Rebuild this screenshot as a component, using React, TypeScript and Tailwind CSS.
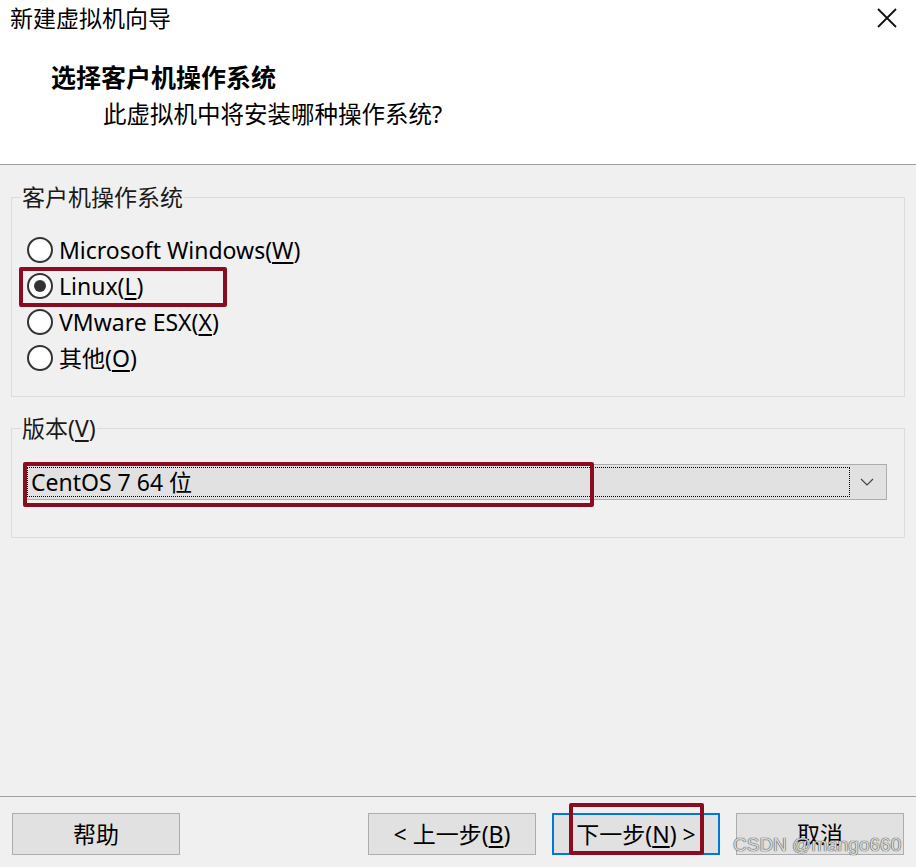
import React from 'react'

const font = '[font-family:"Noto_Sans","Noto_Sans_CJK_SC",sans-serif]'

function Radio({ label, accel, checked }: { label: string; accel: string; checked?: boolean }) {
  return (
    <div className="flex items-center h-[36px] pl-[15px]">
      <span className="w-[26px] h-[26px] rounded-full border-2 border-[#333] bg-white flex items-center justify-center">
        {checked && <span className="w-[12px] h-[12px] rounded-full bg-[#333]" />}
      </span>
      <span className="ml-[6px] text-[23px] leading-none text-black">
        {label}(<span className="underline underline-offset-[3px]">{accel}</span>)
      </span>
    </div>
  )
}

function Button({ children, focused }: { children: React.ReactNode; focused?: boolean }) {
  return (
    <div
      className={
        'w-[168px] h-[42px] flex items-center justify-center bg-[#e1e1e1] text-[23px] text-black ' +
        (focused ? 'border-2 border-[#0078d7]' : 'border border-[#adadad]')
      }
    >
      {children}
    </div>
  )
}

export default function App() {
  return (
    <div className={`relative w-full h-screen bg-[#f0f0f0] flex flex-col text-black ${font}`}>
      {/* header */}
      <div className="h-[165px] bg-white border-b border-[#a0a0a0]">
        <div className="flex items-center justify-between pl-[10px] pr-[18px] pt-[3px] h-[33px]">
          <span className="text-[23px] leading-[30px]">新建虚拟机向导</span>
          <svg width="22" height="22" viewBox="0 0 22 22">
            <path d="M2 2 L20 20 M20 2 L2 20" stroke="#111" strokeWidth="1.8" />
          </svg>
        </div>
        <div className="mt-[29px] pl-[51px] text-[25px] leading-[30px] font-bold">选择客户机操作系统</div>
        <div className="mt-[7px] pl-[103px] text-[23.5px] leading-[30px]">此虚拟机中将安装哪种操作系统?</div>
      </div>

      {/* content */}
      <div className="flex-1 px-[11px]">
        <fieldset className="mt-[17px] border border-[#dcdcdc] pt-[20px] pb-[20px]">
          <legend className="ml-[9px] px-[1px] text-[23px] leading-[30px] text-[#1a1a1a]">客户机操作系统</legend>
          <Radio label="Microsoft Windows" accel="W" />
          <Radio label="Linux" accel="L" checked />
          <Radio label="VMware ESX" accel="X" />
          <Radio label="其他" accel="O" />
        </fieldset>

        <fieldset className="mt-[16px] border border-[#dcdcdc] pt-[21px] pb-[37px]">
          <legend className="ml-[9px] px-[1px] text-[23px] leading-[30px] text-[#1a1a1a]">
            版本(<span className="underline underline-offset-[3px]">V</span>)
          </legend>
          <div className="ml-[12px] mr-[17px] h-[36px] bg-[#e1e1e1] border border-[#adadad] flex items-center p-[2px]">
            <div className="flex-1 h-full border border-dotted border-black flex items-center pl-[3px] text-[23px]">
              CentOS 7 64 位
            </div>
            <div className="w-[34px] flex items-center justify-center">
              <svg width="14" height="8" viewBox="0 0 14 8">
                <path d="M1 1 L7 7 L13 1" stroke="#444" strokeWidth="1.2" fill="none" />
              </svg>
            </div>
          </div>
        </fieldset>
      </div>

      {/* footer */}
      <div className="h-[71px] border-t border-[#a0a0a0] flex items-start pt-[16px] px-[12px]">
        <Button>帮助</Button>
        <div className="flex-1" />
        <div className="flex gap-[16px]">
          <Button>&lt; 上一步(<span className="underline underline-offset-[3px]">B</span>)</Button>
          <Button focused>下一步(<span className="underline underline-offset-[3px]">N</span>) &gt;</Button>
          <Button>取消</Button>
        </div>
      </div>

      {/* annotation boxes */}
      <div className="absolute left-[19px] top-[267px] w-[208px] h-[40px] border-4 border-[#8a0c20] rounded-[2px]" />
      <div className="absolute left-[23px] top-[462px] w-[571px] h-[45px] border-4 border-[#8a0c20] rounded-[2px]" />
      <div className="absolute left-[569px] top-[803px] w-[135px] h-[52px] border-4 border-[#8a0c20] rounded-[2px]" />

      {/* watermark */}
      <div className="absolute left-[733px] top-[831px] text-[19px] leading-[28px] text-[#d8d8d8] [text-shadow:0_0_1px_#444,0_0_1px_#444] [font-family:'Liberation_Sans',sans-serif]">
        CSDN @mango660
      </div>
    </div>
  )
}
